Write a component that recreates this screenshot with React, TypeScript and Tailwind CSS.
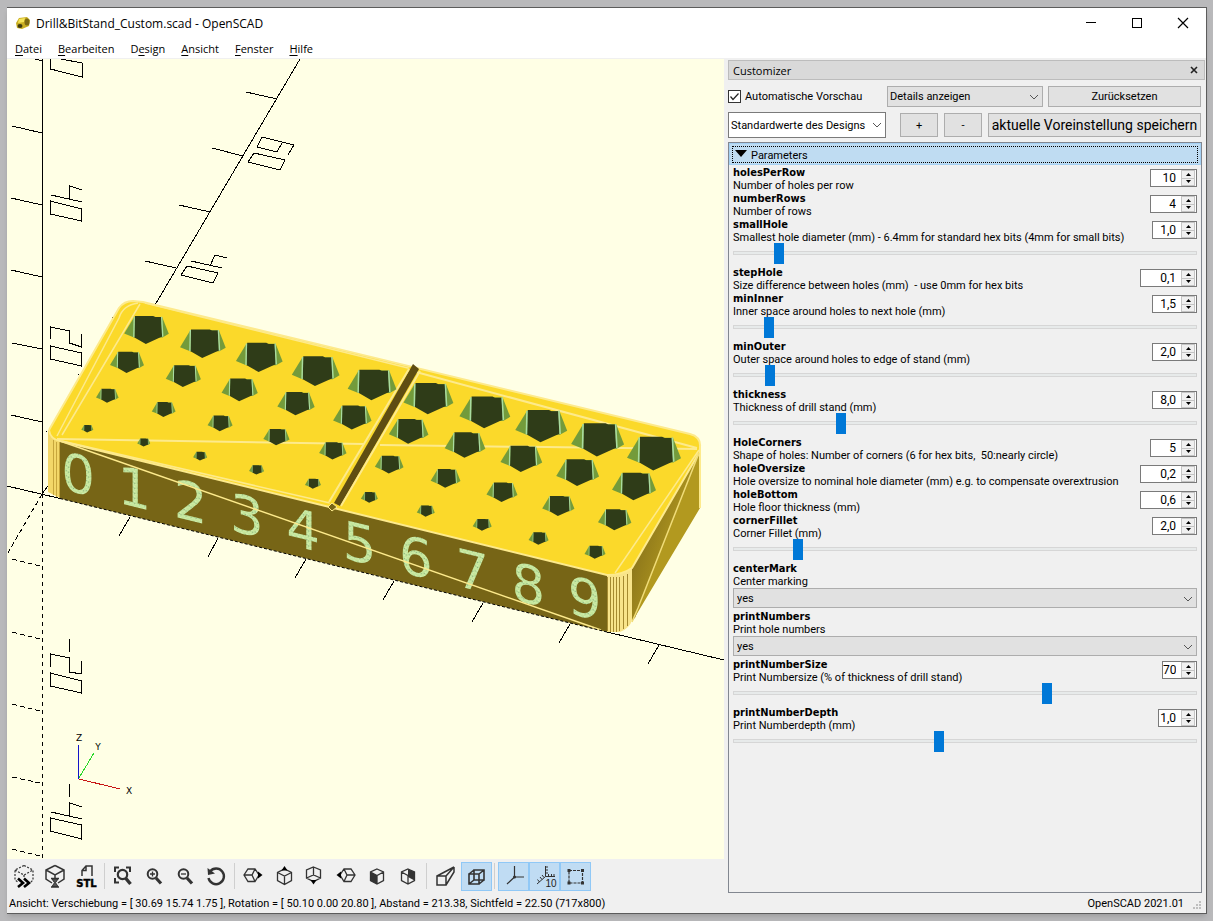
import type { ReactNode } from "react";

type Param = {
  name: string;
  label: string;
  value?: string;
  spinWidth?: string;
  slider?: number;
  select?: boolean;
};

const PARAMS: Param[] = [
  { name: "holesPerRow", label: "Number of holes per row", value: "10", spinWidth: "w-[47px]" },
  { name: "numberRows", label: "Number of rows", value: "4", spinWidth: "w-[47px]" },
  {
    name: "smallHole",
    label: "Smallest hole diameter (mm) - 6.4mm for standard hex bits (4mm for small bits)",
    value: "1,0",
    spinWidth: "w-[45px]",
    slider: 89,
  },
  { name: "stepHole", label: "Size difference between holes (mm)  - use 0mm for hex bits", value: "0,1", spinWidth: "w-[57px]" },
  { name: "minInner", label: "Inner space around holes to next hole (mm)", value: "1,5", spinWidth: "w-[45px]", slider: 67 },
  { name: "minOuter", label: "Outer space around holes to edge of stand (mm)", value: "2,0", spinWidth: "w-[45px]", slider: 69 },
  { name: "thickness", label: "Thickness of drill stand (mm)", value: "8,0", spinWidth: "w-[45px]", slider: 226 },
  { name: "HoleCorners", label: "Shape of holes: Number of corners (6 for hex bits,  50:nearly circle)", value: "5", spinWidth: "w-[47px]" },
  {
    name: "holeOversize",
    label: "Hole oversize to nominal hole diameter (mm) e.g. to compensate overextrusion",
    value: "0,2",
    spinWidth: "w-[57px]",
  },
  { name: "holeBottom", label: "Hole floor thickness (mm)", value: "0,6", spinWidth: "w-[57px]" },
  { name: "cornerFillet", label: "Corner Fillet (mm)", value: "2,0", spinWidth: "w-[45px]", slider: 131 },
  { name: "centerMark", label: "Center marking", select: true },
  { name: "printNumbers", label: "Print hole numbers", select: true },
  { name: "printNumberSize", label: "Print Numbersize (% of thickness of drill stand)", value: "70", spinWidth: "w-[35px]", slider: 681 },
  { name: "printNumberDepth", label: "Print Numberdepth (mm)", value: "1,0", spinWidth: "w-[39px]", slider: 443 },
];

const MENU = [
  ["", "D", "atei"],
  ["", "B", "earbeiten"],
  ["D", "e", "sign"],
  ["", "A", "nsicht"],
  ["", "F", "enster"],
  ["", "H", "ilfe"],
];

// first and last hole of every row: x, top y, half width
const HOLE_ROWS = [
  { from: [146.5, 316, 22.3], to: [654, 436.7, 27] },
  { from: [127, 351.7, 17], to: [634, 472.7, 22] },
  { from: [107.3, 388.7, 11.3], to: [614.7, 509.3, 16.7] },
  { from: [87.3, 425, 6], to: [595, 545.7, 10.5] },
];

function Chevron() {
  return (
    <svg className="pointer-events-none absolute right-1 top-1/2 h-2 w-[10px] -translate-y-1/2" viewBox="0 0 10 8" fill="none" stroke="#555">
      <path d="M1 2 L5 6 L9 2" />
    </svg>
  );
}

function Hole({ x, y, s }: { x: number; y: number; s: number }) {
  const pts = (list: number[][]) => list.map(([a, b]) => `${x + a * s},${y + b * s}`).join(" ");
  return (
    <g>
      <polygon fill="#739b3b" points={pts([[-0.55, 0.04], [-1, 0.78], [-0.56, 0.96], [0.72, 0.96], [1, 0.8], [0.7, 0.04]])} />
      <polygon fill="#2f3c18" points={pts([[-0.52, 0], [0.3, 0], [0.4, 0.05], [0.66, 0.05], [0.7, 0.92], [-0.03, 1.25], [-0.54, 0.96]])} />
      <polyline fill="none" stroke="#a9dca0" strokeWidth={s * 0.06} points={pts([[-0.55, 0.03], [-0.57, 0.95]])} />
      <polyline fill="none" stroke="#a9dca0" strokeWidth={s * 0.06} points={pts([[0.68, 0.03], [0.73, 0.93]])} />
    </g>
  );
}

function Scene() {
  const holes = HOLE_ROWS.flatMap(({ from, to }) =>
    Array.from({ length: 10 }, (_, i) => from.map((v, k) => v + ((to[k] - v) * i) / 9))
  );
  return (
    <svg
      className="min-h-0 w-full flex-1 bg-[#ffffe5]"
      viewBox="7 59 717 800"
      preserveAspectRatio="xMinYMin slice"
      role="img"
      aria-label="3D preview of the drill stand"
    >
      <defs>
        <pattern id="speckle" width="5" height="5" patternUnits="userSpaceOnUse">
          <rect width="5" height="5" fill="#c3e59a" />
          <path d="M0 1.500h1M3 0.500h1" stroke="#86b184" />
          <path d="M1 2.500h1M4 4.500h1M0 4.500h1M3 2.500h1" stroke="#d5efb4" />
        </pattern>
        <linearGradient id="side" x1="0.3" y1="0.3" x2="0.7" y2="0.6">
          <stop offset="0" stopColor="#8e781b" />
          <stop offset="1" stopColor="#b2991f" />
        </linearGradient>
      </defs>

      {/* axes with their ticks */}
      <g fill="none" stroke="#000" shapeRendering="crispEdges">
        <path d="M42.5 59V494M300 59L155 305M48 486L42 494M7 486L60 498.5M607 632L724 660" />
        <path
          d="M35 59L42 60.7M12 126L42 133M11 198L42 205M11 270L42 277M12 343L42 349M11 415L42 422
             M246 92L277 99M212 148L243 156M179 205L210 212M145 261L176 268
             M130 517L119 536M218 538L208 557M306 559L295 578M394 581L383 600M483 603L472 622M570 624L559 643M659 645L648 664"
        />
        <path strokeDasharray="4 4" d="M42.5 494V859" />
        <path strokeDasharray="5 3" d="M42 494L8 553M12 559L40 566M12 632L40 639M12 704L40 711M12 777L40 783M12 849L40 856" />
        <path
          d="M50.5 59V69L82 77V63L61 59
             M50.5 201L81.5 209V221L50.5 214ZM51 195L82 202M69.5 199V186L82 190
             M50.5 339V327L69.5 331V343L81.5 347V334M50.5 346L81.5 353V366L50.5 359Z
             M69.5 639V652M50.5 667V654L69.5 658V672L81.5 674V661M50.5 673L81.5 681V693L50.5 686Z
             M69.5 784V797M69.5 816V803L82 807M51 812L82 819M50.5 818L81.5 825V839L50.5 831Z"
        />
        <path
          d="M257 147L262 137L294 145L288 155M257 147L277 152L282 143M254 153L285 160L280 170L248 162Z
             M191 261L222 268M210 266L215 255L227 258M187 266L218 273L213 283L181 275Z"
        />
        <path d="M112 317h1M78 374h1M46 431h1" />
      </g>

      {/* body */}
      <path fill="#b2991f" d="M631 568L699 453L700 444V508L632 622Z" />
      <path fill="url(#side)" d="M631 568L699 453L658 557L635 618L631 620Z" />
      <path fill="#776516" d="M60 441L607 575V632L60 498.5Z" />
      <path fill="#f3d768" d="M48 430L60 441V498L48 492Z" />
      <path fill="none" stroke="#c7a63c" d="M53.5 440V495M56.5 442V497M59.5 442V498" />
      <path fill="#f8e48a" d="M607 575L620 573L632 567V620Q630 628 620 632L607 632Z" />
      <path
        fill="none"
        stroke="#a58a30"
        d="M607.5 577V631M610.5 577V632M613.5 577V632M616.5 577V632M619.5 577V631M623.5 576V629M627.5 574V626"
      />
      <path fill="#fbd92a" d="M49 430L119 308Q124 301 133 301L143 302L690 434Q701 437 700 447L699 453L632 568Q622 575 607 575L60 441Q50 438 49 430Z" />

      {/* mesh edges */}
      <g fill="none" stroke="#fdea8c" strokeWidth="1.500">
        <path strokeWidth="2" d="M49 430L119 308Q124 301 133 301L143 302L690 434Q701 437 700 447V508" />
        <path d="M140 304L62 435M138 303Q123 305 119 318L57 436" />
        <path strokeWidth="2" d="M57 439L364 444M380 445L697 449M416 372L697 448" />
        <path d="M145 303L416 370M699 450L615 573" />
        <path strokeWidth="2" d="M49 430Q50 439 60 441L607 575Q622 575 632 568L699 453" />
        <path d="M62 441L330 503" />
        <path d="M699 453L658 557L638 608L632 622" stroke="#f0dc78" />
      </g>

      {/* centre mark */}
      <path fill="#fbd92a" d="M409 368L414 365L334 505L329 503Z" />
      <path fill="#5f4d12" d="M413 364L419 369L340 506L334 503Z" />
      <path fill="none" stroke="#fdea8c" strokeWidth="2" d="M409 369L329 502M420 371L341 506" />
      <path fill="#776516" stroke="#fdea8c" d="M332 503L337 507L332 511L328 507Z" />

      {holes.map(([x, y, s], i) => (
        <Hole key={i} x={x} y={y} s={s} />
      ))}

      {/* engraved numbers follow the slope of the front face */}
      <g className="font-['DejaVu_Sans']" fill="url(#speckle)" fontSize="53" textAnchor="middle">
        {Array.from({ length: 10 }, (_, i) => (
          <text key={i} transform={`translate(${78 + i * 56.3} ${493 + i * 13.8}) skewY(13.7)`}>
            {i}
          </text>
        ))}
      </g>
      <path fill="none" stroke="#fdea8c" strokeWidth="1.500" d="M60 441L601 630" />
      <path fill="none" stroke="#000" strokeDasharray="3 2" d="M60 498.5L607 632" />

      {/* orientation cross */}
      <g fill="none" shapeRendering="crispEdges">
        <path stroke="#1414c8" d="M78.5 745V779" />
        <path stroke="#28d828" d="M79 778L94 753" />
        <path stroke="#c81414" d="M79 779L120 789" />
      </g>
      <g className="font-['DejaVu_Sans']" fontSize="9" textAnchor="middle">
        <text x="79" y="741">Z</text>
        <text x="98" y="750">Y</text>
        <text x="129" y="794">X</text>
      </g>
    </svg>
  );
}

function ToolButton({ label, active, children }: { label: string; active?: boolean; children: ReactNode }) {
  return (
    <button
      type="button"
      aria-label={label}
      className={`flex h-[29px] w-[31px] items-center justify-center border ${active ? "border-[#90c8f6] bg-[#c0dcf3]" : "border-transparent"}`}
    >
      <svg className="h-6 w-6" viewBox="0 0 24 24" fill="none" stroke="#333" strokeWidth="1.500">
        {children}
      </svg>
    </button>
  );
}

function Separator() {
  return <div className="mx-[2px] h-[26px] w-[2px] border-l border-[#cfcfcf]" />;
}

function Toolbar() {
  return (
    <div className="flex h-[34px] items-center pl-[2px]">
      <ToolButton label="Vorschau">
        <path d="M11 1.500L20 6V16L17 19M11 1.500L2 6V16L5 18M2 6L11 11L20 6M11 11V13" strokeDasharray="2 1.500" strokeWidth="1.200" />
        <path d="M5 14.500L10 19L5 23M11 14.500L16 19L11 23" stroke="#000" strokeWidth="2.600" />
      </ToolButton>
      <ToolButton label="Rendern">
        <path d="M11 1.500L20 6V15L14 19M11 1.500L2 6V15L8 19M2 6L11 11L20 6M11 11V14" />
        <path d="M7 14.500H15M7 23H15" />
        <path d="M8 15H14L11.500 18.700L14 22.500H8L10.500 18.700Z" fill="#555" strokeWidth="1" />
      </ToolButton>
      <ToolButton label="Als STL exportieren">
        <path d="M7 12V6.500L11 2H17V12M11 2V6.500H7" />
        <text className="font-['DejaVu_Sans'] font-bold" x="11.500" y="23" fontSize="10" textAnchor="middle" fill="#000" stroke="#000" strokeWidth="0.4">
          STL
        </text>
      </ToolButton>
      <Separator />
      <ToolButton label="Alles anzeigen">
        <path d="M3 8V3.500H7M14 3.500H18V8M3 14V18.500H7" strokeWidth="2" />
        <circle cx="10.500" cy="10.500" r="4.700" strokeWidth="2.200" />
        <path d="M13.500 14L18.500 20" strokeWidth="3.400" />
      </ToolButton>
      <ToolButton label="Vergrößern">
        <circle cx="9.500" cy="10" r="4.800" strokeWidth="2" />
        <path d="M7 10H12M9.500 7.500V12.500" strokeWidth="1.300" />
        <path d="M13 14L18 19.500" strokeWidth="3.200" />
      </ToolButton>
      <ToolButton label="Verkleinern">
        <circle cx="9.500" cy="10" r="4.800" strokeWidth="2" />
        <path d="M7 10H12" strokeWidth="1.300" />
        <path d="M13 14L18 19.500" strokeWidth="3.200" />
      </ToolButton>
      <ToolButton label="Ansicht zurücksetzen">
        <path d="M5 7.500A7.800 7.800 0 1 1 3.500 14" strokeWidth="2.400" />
        <path d="M2.500 4L3 11L10 9.500Z" fill="#333" stroke="none" />
      </ToolButton>
      <Separator />
      <ToolButton label="Rechts">
        <path d="M6 5H13L17 11L13 17.500H6L2 11ZM2 11H10L13 5M10 11L13 17.500" strokeWidth="1.300" />
        <path d="M16 7.500L20.500 11L16 14.500Z" fill="#000" stroke="none" />
      </ToolButton>
      <ToolButton label="Oben">
        <path d="M11.500 5L18.500 8.500V16.500L11.500 20.500L4.500 16.500V8.500ZM4.500 8.500L11.500 12L18.500 8.500M11.500 12V20.500" strokeWidth="1.300" />
        <path d="M8.500 6.500L11.500 2L14.500 6.500Z" fill="#000" stroke="none" />
      </ToolButton>
      <ToolButton label="Unten">
        <path d="M9.500 3L16.500 6V14L9.500 17.500L2.500 14V6ZM9.500 3V11M2.500 14L9.500 11L16.500 14" strokeWidth="1.300" />
        <path d="M6.500 16L9.500 20.500L12.500 16Z" fill="#000" stroke="none" />
      </ToolButton>
      <ToolButton label="Links">
        <path d="M9 5H16L20 11L16 17.500H9L5 11ZM20 11H12L9 5M12 11L9 17.500" strokeWidth="1.300" />
        <path d="M6 7.500L1.500 11L6 14.500Z" fill="#000" stroke="none" />
      </ToolButton>
      <ToolButton label="Vorne">
        <path d="M11 5L17.500 8V16.500L11 20L4.500 16.500V8ZM4.500 8L11 11.500L17.500 8M11 11.500V20" strokeWidth="1.300" />
        <path d="M4.500 8L11 11.500V20L4.500 16.500Z" fill="#333" stroke="none" />
      </ToolButton>
      <ToolButton label="Hinten">
        <path d="M11 5L17.500 8V16.500L11 20L4.500 16.500V8ZM4.500 8L11 11.500L17.500 8M11 11.500V20" strokeWidth="1.300" />
        <path d="M11 5L17.500 8V16.500L11 13Z" fill="#333" stroke="none" />
      </ToolButton>
      <Separator />
      <ToolButton label="Perspektive">
        <path d="M3 12H12V21H3ZM3 12L20 3L12 12M20 3V8L12 21" />
      </ToolButton>
      <ToolButton label="Orthogonal" active>
        <path d="M4 10H14V20H4ZM9 6H19V16H9ZM4 10L9 6M14 10L19 6M14 20L19 16M4 20L9 16" strokeWidth="1.600" />
      </ToolButton>
      <Separator />
      <ToolButton label="Achsen anzeigen" active>
        <path d="M12.500 2V13H22M12.500 13L5 20" strokeWidth="1.200" />
        <circle cx="12.500" cy="13" r="1.500" fill="#333" stroke="none" />
      </ToolButton>
      <ToolButton label="Skala anzeigen" active>
        <path
          d="M12.500 2V12.500H22M12.500 12.500L4 20M12.500 3H15M12.500 6H15M12.500 9H15M15.500 10V12M18.500 10V12M21 10V12M7 13L9 15.500M4.500 15.500L6.500 18M9 11L11 13.500"
          strokeWidth="1"
        />
        <text className="font-['Liberation_Sans']" x="18" y="22.500" fontSize="10" textAnchor="middle" fill="#222" stroke="none">
          10
        </text>
      </ToolButton>
      <ToolButton label="Kanten anzeigen" active>
        <path d="M5 6.500H18.500V19H5Z" strokeWidth="1.200" strokeDasharray="3 1" />
        <path d="M3.500 5h3v3h-3zM17 5h3v3h-3zM3.500 17.500h3v3h-3zM17 17.500h3v3h-3z" fill="#333" stroke="none" />
      </ToolButton>
    </div>
  );
}

function SpinBox({ id, value, width }: { id: string; value: string; width: string }) {
  return (
    <div className={`mt-[3px] flex h-[18px] shrink-0 border border-[#7a7a7a] bg-white ${width}`}>
      <input id={id} defaultValue={value} className="w-0 min-w-0 flex-1 pr-[5px] text-right text-[12px] outline-none" />
      <div className="mr-px flex w-[14px] flex-col border border-[#c4c4c4] bg-[#f0f0f0]">
        <button type="button" aria-label={`${id} erhöhen`} className="flex flex-1 items-center justify-center border-b border-[#c4c4c4]">
          <svg className="h-[3px] w-[5px]" viewBox="0 0 5 3">
            <path d="M0 3L2.500 0L5 3Z" />
          </svg>
        </button>
        <button type="button" aria-label={`${id} verringern`} className="flex flex-1 items-center justify-center">
          <svg className="h-[3px] w-[5px]" viewBox="0 0 5 3">
            <path d="M0 0L2.500 3L5 0Z" />
          </svg>
        </button>
      </div>
    </div>
  );
}

function ParamRow({ param }: { param: Param }) {
  const { name, label, value, spinWidth, slider, select } = param;
  return (
    <div>
      <div className="flex h-[26px] justify-between">
        <label htmlFor={name} className="whitespace-pre leading-[13px]">
          <span className="block font-['DejaVu_Sans_Condensed','DejaVu_Sans'] font-bold">{name}</span>
          <span className="block">{label}</span>
        </label>
        {value && spinWidth && <SpinBox id={name} value={value} width={spinWidth} />}
      </div>
      {slider !== undefined && (
        <input
          type="range"
          aria-label={`${name} Regler`}
          min={0}
          max={1000}
          defaultValue={slider}
          className="mb-1 block h-[18px] w-full appearance-none bg-transparent [&::-webkit-slider-runnable-track]:h-1 [&::-webkit-slider-runnable-track]:border [&::-webkit-slider-runnable-track]:border-[#d6d6d6] [&::-webkit-slider-runnable-track]:bg-[#e7eaea] [&::-webkit-slider-thumb]:mt-[-9px] [&::-webkit-slider-thumb]:h-[21px] [&::-webkit-slider-thumb]:w-[10px] [&::-webkit-slider-thumb]:appearance-none [&::-webkit-slider-thumb]:bg-[#0078d7]"
        />
      )}
      {select && (
        <div className="relative h-[22px]">
          <select id={name} className="h-5 w-full appearance-none border border-[#adadad] bg-[#e1e1e1] pl-[3px]">
            <option>yes</option>
            <option>no</option>
          </select>
          <Chevron />
        </div>
      )}
    </div>
  );
}

function Customizer() {
  return (
    <aside className="flex w-[482px] shrink-0 flex-col pl-1 pr-px pt-[1px]">
      <div className="flex h-5 items-center justify-between border border-[#bcbcbc] bg-[#d9d9d9] px-1 font-['Open_Sans'] text-[11px]">
        <h2>Customizer</h2>
        <button type="button" aria-label="Schließen" className="p-[2px]">
          <svg className="h-2 w-2" viewBox="0 0 8 8" stroke="#222" strokeWidth="1.600">
            <path d="M1 1L7 7M7 1L1 7" />
          </svg>
        </button>
      </div>

      <div className="mr-1 mt-[6px] flex h-[21px] items-center">
        <label className="flex flex-1 items-center gap-1">
          <span className="relative h-[13px] w-[13px]">
            <input type="checkbox" defaultChecked className="block h-[13px] w-[13px] appearance-none border border-[#333] bg-white" />
            <svg className="pointer-events-none absolute inset-0" viewBox="0 0 13 13" fill="none" stroke="#222" strokeWidth="1.200">
              <path d="M2.500 6.500L5 9.500L10.500 3.500" />
            </svg>
          </span>
          Automatische Vorschau
        </label>
        <div className="relative mr-[5px] h-full w-[156px]">
          <select aria-label="Detailgrad" className="h-full w-full appearance-none border border-[#adadad] bg-[#e1e1e1] pl-[2px]">
            <option>Details anzeigen</option>
          </select>
          <Chevron />
        </div>
        <button type="button" className="h-full w-[153px] border border-[#adadad] bg-[#e1e1e1]">
          Zurücksetzen
        </button>
      </div>

      <div className="mr-1 mt-[5px] flex h-[26px] items-center">
        <div className="relative h-full w-[158px]">
          <select aria-label="Voreinstellung" className="h-full w-full appearance-none border border-[#7a7a7a] bg-white pl-[2px]">
            <option>Standardwerte des Designs</option>
          </select>
          <Chevron />
        </div>
        <div className="flex h-6 flex-1 justify-end gap-[6px]">
          <button type="button" aria-label="Voreinstellung hinzufügen" className="w-[38px] border border-[#adadad] bg-[#e1e1e1]">
            +
          </button>
          <button type="button" aria-label="Voreinstellung entfernen" className="w-[38px] border border-[#adadad] bg-[#e1e1e1]">
            -
          </button>
          <button type="button" className="w-[213px] whitespace-nowrap border border-[#adadad] bg-[#e1e1e1] text-[14px]">
            aktuelle Voreinstellung speichern
          </button>
        </div>
      </div>

      <div className="mr-[3px] mt-1 flex-1 border border-[#828790]">
        <button type="button" aria-expanded="true" className="block h-[22px] w-full border border-[#a5d1f4] bg-[#bfdcf2] p-[2px] text-left">
          <span className="flex h-[17px] items-end gap-1 border border-dotted border-black pl-[2px]">
            <svg className="mb-1 h-2 w-3" viewBox="0 0 12 8">
              <path d="M0 0H12L6 7Z" />
            </svg>
            Parameters
          </span>
        </button>
        <div className="pl-1 pr-1 pt-px">
          {PARAMS.map((p) => (
            <ParamRow key={p.name} param={p} />
          ))}
        </div>
      </div>
    </aside>
  );
}

export default function App() {
  return (
    <div className="flex h-screen bg-[#b9b9bb] pb-[7px] pl-[7px] pr-[6px] pt-[7px] font-['Roboto',sans-serif] text-[11px] leading-[13px] text-black">
      <div className="flex min-w-0 flex-1 flex-col border border-l-0 border-[#5c5c5c] bg-[#f0f0f0] shadow-md">
        <header className="flex h-[30px] items-center bg-white pl-2">
          <svg className="mr-[5px] h-4 w-4" viewBox="0 0 16 16">
            <path d="M1 8L4 3L12 2L15 5L14 11L7 14L2 13Z" fill="#c9ae22" />
            <path d="M4 4L10 3L9 7L3 8Z" fill="#f5e45a" />
            <ellipse cx="12" cy="7" rx="2.500" ry="3.500" fill="#7d6a12" />
            <ellipse cx="5" cy="11" rx="2.500" ry="2" fill="#3f3a10" />
          </svg>
          <h1 className="flex-1 font-['Open_Sans'] text-[12px]">Drill&amp;BitStand_Custom.scad - OpenSCAD</h1>
          <div className="flex">
            <button type="button" aria-label="Minimieren" className="flex h-[29px] w-[46px] items-center justify-center">
              <svg className="h-3 w-3" viewBox="0 0 12 12" stroke="#000" shapeRendering="crispEdges">
                <path d="M1 5.500H11" />
              </svg>
            </button>
            <button type="button" aria-label="Maximieren" className="flex h-[29px] w-[46px] items-center justify-center">
              <svg className="h-3 w-3" viewBox="0 0 12 12" fill="none" stroke="#000" shapeRendering="crispEdges">
                <path d="M1.500 1.500H10.500V10.500H1.500Z" />
              </svg>
            </button>
            <button type="button" aria-label="Schließen" className="flex h-[29px] w-[46px] items-center justify-center">
              <svg className="h-3 w-3" viewBox="0 0 12 12" stroke="#000" strokeWidth="1.200">
                <path d="M1 1L11 11M11 1L1 11" />
              </svg>
            </button>
          </div>
        </header>

        <nav className="flex h-[21px] items-center gap-4 border-b border-[#f0f0f0] bg-white pl-2 font-['Open_Sans'] text-[11px]">
          {MENU.map(([pre, key, post]) => (
            <button type="button" key={pre + key + post}>
              {pre}
              <u className="underline-offset-2">{key}</u>
              {post}
            </button>
          ))}
        </nav>

        <div className="flex min-h-0 flex-1">
          <main className="flex min-w-0 flex-1 flex-col">
            <Scene />
            <Toolbar />
          </main>
          <Customizer />
        </div>

        <footer className="flex h-5 items-center justify-between pl-[2px] pr-1">
          <span>
            Ansicht: Verschiebung = [ 30.69 15.74 1.75 ], Rotation = [ 50.10 0.00 20.80 ], Abstand = 213.38, Sichtfeld = 22.50 (717x800)
          </span>
          <span className="flex items-end gap-[9px]">
            OpenSCAD 2021.01
            <svg className="h-[9px] w-[9px]" viewBox="0 0 9 9" fill="#bfbfbf">
              <path d="M6 0h2v2h-2zM6 3h2v2h-2zM6 6h2v2h-2zM3 3h2v2h-2zM3 6h2v2h-2zM0 6h2v2h-2z" />
            </svg>
          </span>
        </footer>
      </div>
    </div>
  );
}
